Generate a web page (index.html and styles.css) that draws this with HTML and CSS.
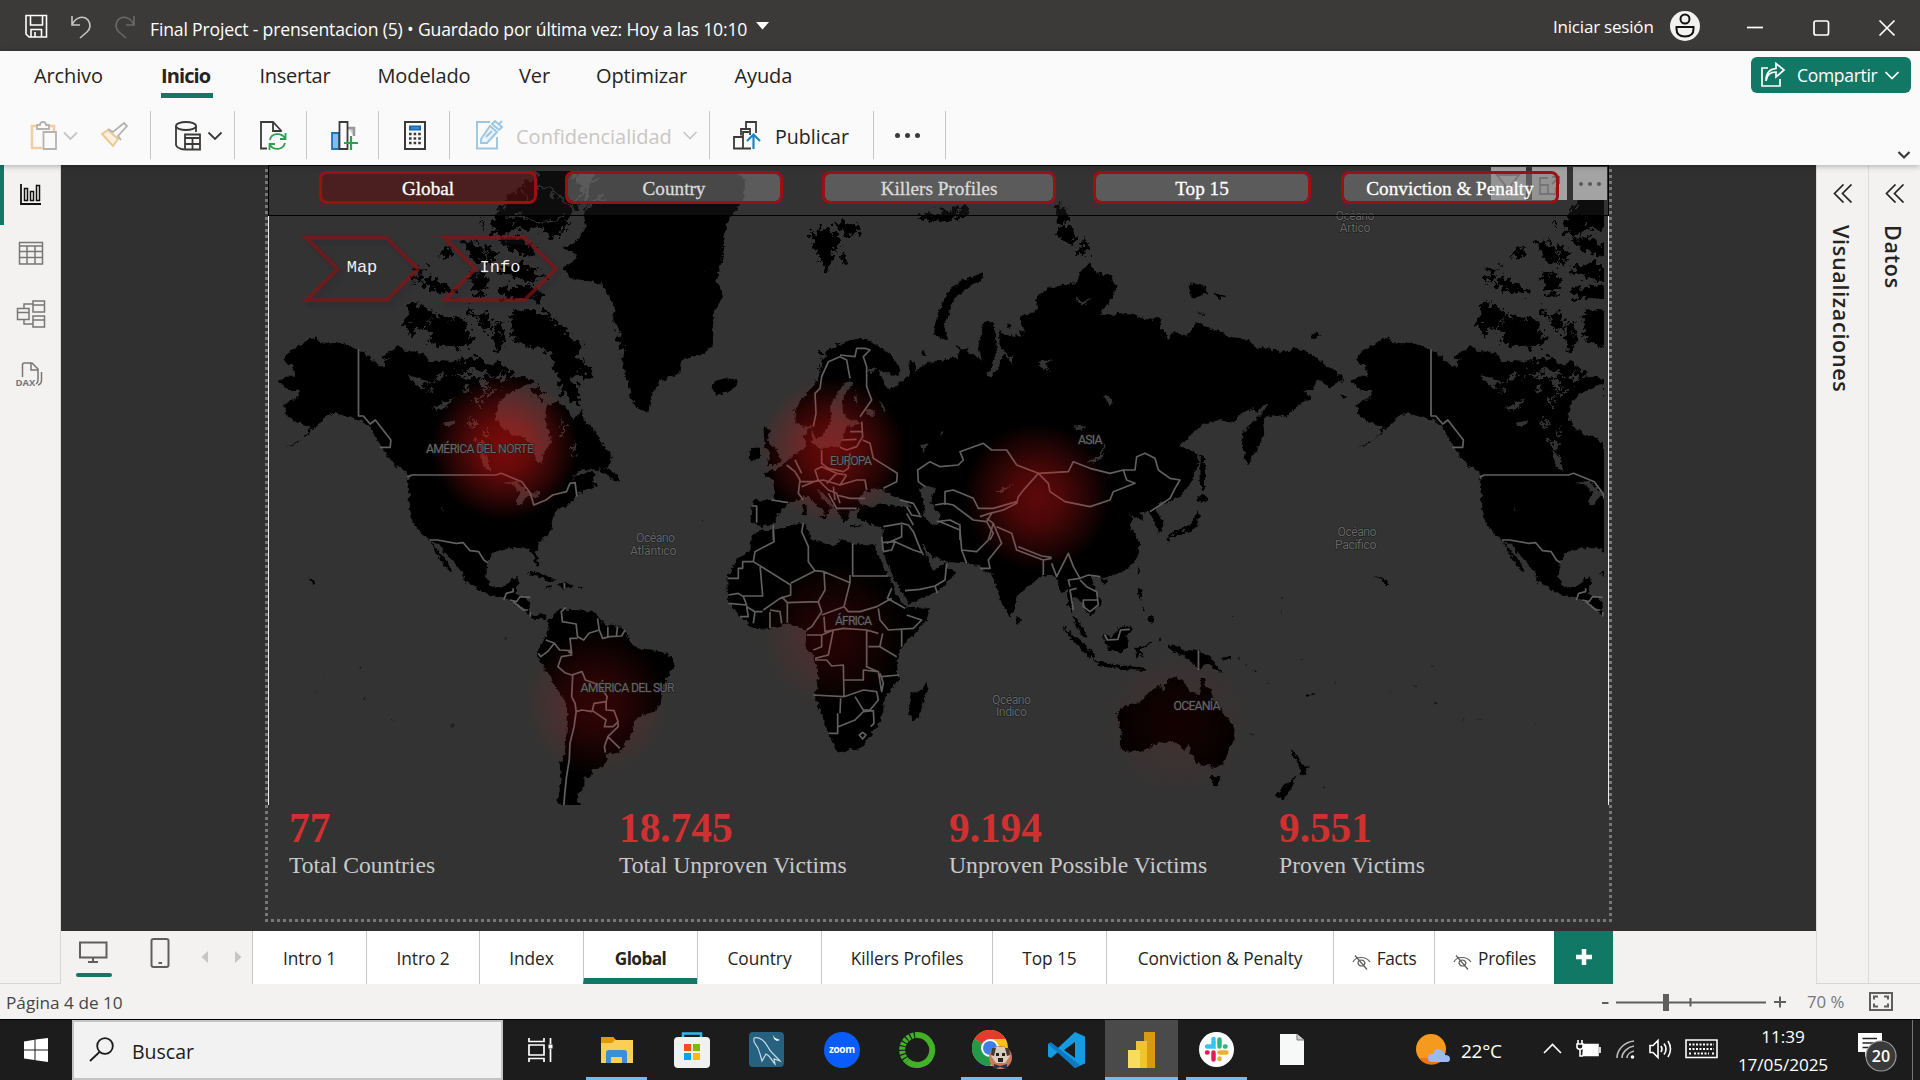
FILE: index.html
```html
<!DOCTYPE html>
<html lang="es">
<head>
<meta charset="utf-8">
<title>Final Project - prensentacion (5)</title>
<link rel="stylesheet" href="styles.css">
</head>
<body>
<header class="titlebar">
  <svg class="quick" width="140" height="51" viewBox="0 0 140 51" fill="none" stroke="#fff" stroke-width="1.6">
    <path d="M26 15.500H46.500V37H29L26 34Z M30.500 16V25H42.500V16 M31 37V29.500H41.500V37 M35 32V37"/>
    <path d="M72 16V25H80 M72.500 24C76 17 84 15 88 20C91 24 90.500 29 87 32L80 38" stroke="#c8c6c4"/>
    <path d="M134 16V25H126 M133.500 24C130 17 122 15 118 20C115 24 115.500 29 119 32L126 38" stroke="#6a6967"/>
  </svg>
  <span class="doc-title">Final Project - prensentacion (5) • Guardado por última vez: Hoy a las 10:10</span>
  <svg class="caret" width="14" height="8" viewBox="0 0 14 8"><path d="M0 0H13L6.500 7.500Z" fill="#fff"/></svg>
  <span class="signin">Iniciar sesión</span>
  <svg class="window-tools" width="250" height="51" viewBox="1670 0 250 51" fill="none" stroke="#fff" stroke-width="1.7">
    <circle cx="1685" cy="26" r="15" fill="#f3f2f1" stroke="none"/>
    <circle cx="1685" cy="19" r="4.500" stroke="#111" stroke-width="2"/>
    <path d="M1676.500 27H1693.500V29C1693.500 34 1690 36.500 1685 36.500S1676.500 34 1676.500 29Z" stroke="#111" stroke-width="2"/>
    <path d="M1747 27.500H1763"/><rect x="1814" y="21" width="14.500" height="14" rx="2"/><path d="M1879.500 20.500L1894.500 35.500M1894.500 20.500L1879.500 35.500"/>
  </svg>
</header>

<section class="ribbon">
  <nav class="ribbon-tabs">
    <span>Archivo</span><span class="on"><b>Inicio</b></span><span>Insertar</span><span>Modelado</span><span>Ver</span><span>Optimizar</span><span>Ayuda</span>
    <button class="share">
      <svg width="26" height="26" viewBox="0 0 26 26" fill="none" stroke="#fff" stroke-width="1.700"><path d="M8 6H2V24H20V17M6 19C7 12 11 10 16 10V15L24 8L16 1.500V6.500C9 7 6 12 6 19Z"/></svg>
      <span>Compartir</span>
      <svg width="16" height="9" viewBox="0 0 16 9" fill="none" stroke="#fff" stroke-width="1.700"><path d="M1.500 1L8 7.500L14.500 1"/></svg>
    </button>
  </nav>
  <div class="tools">
    <div class="tool t1">
      <svg width="126" height="48" viewBox="25 111 126 48" fill="none" stroke-width="1.800">
        <path d="M42 148H32V126H36 M49 126H54V131" stroke="#f3cda0" stroke-width="2.500"/><path d="M37 129V125H40C40 121 46 121 46 125H49V129Z M43.500 132H56V149H43.500Z" stroke="#b5b3b1" fill="#fafafa"/>
        <path d="M64 132.500L70.500 139L77 132.500" stroke="#c8c6c4"/>
        <path d="M102 134L108 130L118 139L113 146Z" stroke="#f0c596" fill="#fdf0dc" stroke-width="2"/><path d="M108 129L113 132L124 123L127 126L118 136L121 140" stroke="#b5b3b1"/>
      </svg>
    </div>
    <div class="tool t2">
      <svg width="83" height="48" viewBox="151 111 83 48" fill="none" stroke="#3b3a39" stroke-width="1.800">
        <ellipse cx="186" cy="126" rx="10" ry="4"/><path d="M176 126V145C177 148 180 149 184 149.500M196 126V132"/><path d="M185 134.500H200V149.500H185ZM185 138H200M185 144H200M192.500 138V149.500"/>
        <path d="M208.500 132.500L215 139L221.500 132.500"/>
      </svg>
    </div>
    <div class="tool t3">
      <svg width="71" height="48" viewBox="235 111 71 48" fill="none" stroke="#3b3a39" stroke-width="1.800"><path d="M267 148.500H261V122H273L281 130.500V132M273 122V131H281"/><path d="M270 140C271 133 281 132 285 138M285.500 133V139H280M285 143C283 150 274 151 270 145M269.500 150V144H275" stroke="#2f9e4f"/></svg>
    </div>
    <div class="tool t4">
      <svg width="71" height="48" viewBox="307 111 71 48" fill="none" stroke="#3b3a39" stroke-width="1.800"><path d="M332 133H339V149H332Z" fill="#83bdeb" stroke="#2372b8"/><path d="M348 128H354V136" stroke="#9a9896" fill="#ccc" stroke-width="2.500"/><path d="M339.500 122H347.500V149H339.500Z"/><path d="M351 136V150M344 143H358" stroke="#2f9e4f" stroke-width="2.200"/></svg>
    </div>
    <div class="tool t5">
      <svg width="71" height="48" viewBox="379 111 71 48" fill="none" stroke="#3b3a39" stroke-width="2"><path d="M405 122H425V149H405Z"/><path d="M410 126.500H420V129.500H410Z" stroke="#1569b5" fill="#5da9e8"/><path d="M409 134H421M409 138.500H421M409 143H421" stroke-width="2.600" stroke-dasharray="2.600 2"/></svg>
    </div>
    <div class="tool t6">
      <svg width="60" height="48" viewBox="450 111 60 48" fill="none" stroke="#9cc7e3" stroke-width="1.900"><path d="M490 122H477V148.500H497V137"/><path d="M481 139L490 126L497 132L487 143L481 143Z M486 137L492 131 M492 124L495 121L502 127L499 130Z M499 124L502 121" fill="#e9f4fa"/></svg>
      <span class="muted">Confidencialidad</span>
      <svg width="16" height="9" viewBox="0 0 16 9" fill="none" stroke="#c8c6c4" stroke-width="1.700"><path d="M1.500 1L8 7.500L14.500 1"/></svg>
    </div>
    <div class="tool t7">
      <svg width="60" height="48" viewBox="710 111 60 48" fill="none" stroke="#3b3a39" stroke-width="1.800"><path d="M741 135.500V129H746V122H756V133M746 129H750V135M734 137H743V148.500H734ZM743 137V132H749M743 148.500H751"/><path d="M753.500 149V134M747 141L753.500 134.500L760 141" stroke="#1b87c9" stroke-width="2.200"/></svg>
      <span>Publicar</span>
    </div>
    <div class="tool t8"><i></i><i></i><i></i></div>
    <svg class="collapse" width="14" height="9" viewBox="0 0 14 9" fill="none" stroke="#3b3a39" stroke-width="2.200"><path d="M1.500 1L7 6.500L12.500 1"/></svg>
  </div>
</section>

<main class="workspace">
  <aside class="rail">
    <svg width="60" height="240" viewBox="0 165 60 240" fill="none" stroke="#797775" stroke-width="1.500">
      <rect x="0" y="165" width="4" height="60" fill="#117865" stroke="none"/>
      <g stroke="#111"><path d="M21 184V204H41" stroke-width="1.800"/><path d="M24.500 188.500H27.500V200.500H24.500ZM30.500 191.500H33.500V200.500H30.500ZM36.500 185.500H39.500V200.500H36.500Z"/></g>
      <path d="M19.500 242.500H42.500V264H19.500ZM19.500 246H42.500M19.500 251.500H42.500M19.500 257.500H42.500M27 246V264M35 246V264"/>
      <path d="M33 301H44.500V312H33ZM33 305H44.500M33 316H44.500V327H33ZM33 320H44.500M17.500 308.500H29V319.500H17.500ZM17.500 312.500H29M24 308V304H33M24 320V324H33"/>
      <path d="M22.500 377V365C22.500 363.500 23 363 24.500 363H32L38 369V380C38 382 37.500 383 36 384M31 363V370H38M41.500 372V380C41.500 383 40 384.500 38 385"/>
      <text x="15.500" y="385.500" class="dax">DAX</text>
    </svg>
  </aside>

  <section class="center">
    <div class="canvas-area">
      <div class="report">
        <svg class="map" width="1331" height="634" viewBox="273 171 1331 634">
          <defs>
            <filter id="coast" x="-5%" y="-5%" width="110%" height="110%" color-interpolation-filters="sRGB"><feTurbulence type="fractalNoise" baseFrequency=".07" numOctaves="3" seed="4"/><feDisplacementMap in="SourceGraphic" scale="18" xChannelSelector="R" yChannelSelector="G"/></filter>
            <filter id="arctic-coast" x="-5%" y="-5%" width="110%" height="110%" color-interpolation-filters="sRGB"><feTurbulence type="fractalNoise" baseFrequency=".06" numOctaves="4" seed="9"/><feDisplacementMap in="SourceGraphic" scale="52" xChannelSelector="R" yChannelSelector="G"/></filter>
            <radialGradient id="heat"><stop offset="0" stop-color="#dc1414"/><stop offset=".35" stop-color="#d81414" stop-opacity=".82"/><stop offset=".7" stop-color="#d01818" stop-opacity=".4"/><stop offset="1" stop-color="#c81818" stop-opacity="0"/></radialGradient>
            <g id="north-america">
              <g transform="translate(260 160) scale(.34439 .33333)">
                <g filter="url(#coast)">
                  <path d="M150 530L175 545 200 550 240 548 285 568 310 585 330 605 345 612 360 590 385 570 400 555 420 572 450 575 470 580 490 600 500 610 530 600 560 605 600 610 640 600 665 620 690 600 700 610 740 640 720 655 760 650 780 655 800 665 745 690 720 700 700 720 688 740 685 780 700 800 735 825 760 828 785 850 795 880 800 900 815 912 822 880 845 850 840 820 830 790 830 750 835 735 860 725 890 740 905 770 910 780 935 750 945 790 965 800 985 840 1010 870 1022 890 1010 920 980 930 935 928 925 935 905 960 930 945 960 935 975 940 965 960 980 975 960 985 925 1000 890 1040 860 1050 850 1075 845 1100 850 1105 810 1150 800 1180 808 1210 806 1215 800 1210 790 1180 775 1165 735 1165 710 1170 680 1175 660 1205 657 1250 665 1275 690 1283 715 1275 725 1258 750 1255 745 1285 740 1300 775 1315 785 1330 780 1350 790 1365 800 1368 820 1362 835 1370 835 1378 820 1372 800 1378 785 1370 765 1345 735 1325 700 1310 670 1305 620 1280 590 1262 595 1250 570 1215 540 1180 520 1155 495 1142 470 1125 460 1110 440 1080 432 1050 432 990 430 960 428 945 425 935 400 920 375 895 360 870 345 850 330 820 320 800 300 785 275 778 240 765 215 760 190 770 170 795 145 815 110 850 75 862 120 840 150 800 120 790 100 785 75 765 70 735 85 720 115 710 110 690 80 690 55 665 75 650 105 650 95 620 65 600 95 565 130 548Z"/>
                  <path d="M495 1142L520 1175 540 1200 558 1235 545 1230 525 1200 505 1165Z M985 925L1010 925 1040 945 1045 970 1015 955Z M775 1240L800 1235 830 1245 860 1260 850 1266 820 1255Z M865 1270L885 1268 912 1278 890 1286 870 1282Z M922 1279h14v5h-14Z M828 1281h16v4h-16Z M140 1250L158 1260 163 1272 155 1275Z"/>
                </g>
                <g filter="url(#arctic-coast)">
                  <path d="M430 430L455 428 480 440 510 460 500 475 470 500 440 525 420 500Z M485 490L520 465 560 480 590 470 600 500 620 540 590 565 550 560 520 560 490 545 500 520 480 505Z M630 460L660 455 670 500 650 520 635 490Z M675 490L700 480 708 565 680 565Z M730 455L760 450 800 452 830 455 850 480 880 500 900 530 930 550 925 590 950 620 970 650 950 660 930 640 900 650 930 700 925 735 900 720 870 690 860 650 850 600 830 570 800 560 770 560 740 540 728 500Z M790 680L825 700 815 725 795 705Z M530 270L560 265 550 290 525 300Z M450 330L485 320 475 350 445 370Z M470 370L500 350 540 380 570 385 560 400 520 400 490 385Z M580 240L640 250 660 310 620 300Z M610 340L650 345 665 380 640 410 615 390Z M650 255L685 270 688 310 665 310Z M690 240L730 232 785 250 800 290 740 280Z M690 330L760 300 800 335 835 350 790 365 740 350Z M690 385L770 375 820 390 810 425 750 412 700 420Z M640 190L650 180 648 215Z M600 460L620 440 625 480Z M565 600L640 590 690 640 640 640Z"/>
                  <path d="M700 140L740 90 800 55 820 10 895 10 930 80 945 110 920 150 900 175 880 215 850 235 830 215 800 205 770 210 740 200 700 230 670 215 685 160Z"/>
                </g>
              </g>
            </g>
          </defs>
          <rect x="273" y="171" width="1331" height="634" fill="#333"/>
          <use href="#north-america"/><use href="#north-america" x="1072.500"/>
          <g transform="translate(260 160) scale(.34439 .33333)">
            <g filter="url(#coast)">
              <path d="M960 60L1000 10 1350 10 1410 60 1400 130 1370 165 1345 220 1340 300 1325 360 1345 410 1315 460 1315 555 1290 580 1225 600 1215 640 1160 665 1140 700 1130 755 1105 750 1080 725 1070 680 1060 640 1050 600 1065 570 1045 545 1050 520 1025 480 1030 440 1015 410 995 375 970 365 900 355 880 325 925 290 900 275 880 265 925 240 945 205 940 170Z M1310 680L1325 662 1350 655 1385 658 1385 675 1360 695 1325 708Z"/>
              <path d="M835 1390L850 1365 870 1350 885 1342 890 1350 920 1350 945 1352 975 1358 985 1375 1005 1395 1050 1400 1060 1410 1075 1440 1080 1455 1110 1465 1140 1470 1165 1475 1195 1490 1203 1510 1195 1535 1175 1565 1165 1600 1160 1635 1145 1655 1110 1665 1085 1685 1085 1715 1065 1745 1050 1770 1035 1780 1005 1780 1010 1800 990 1825 965 1828 965 1848 942 1850 942 1880 920 1905 925 1925 937 1945 875 1945 860 1920 875 1870 870 1810 885 1780 890 1720 895 1650 885 1620 855 1575 830 1530 805 1490 805 1465 825 1440 835 1420Z"/>
              <path d="M1290 330h3v3h-3ZM120 1450h4v3h-4ZM185 1535h4v4h-4ZM290 1520h6v6h-6ZM300 1610h5v8h-5ZM163 1595h5v4h-5ZM380 1678h4v3h-4ZM555 1697h5v3h-5ZM710 1430h4v6h-4ZM1282 1080h4v5h-4Z" fill="#181818"/>
            </g>
            <g filter="url(#arctic-coast)"><path d="M1330 170L1350 180 1335 330 1320 300Z M1270 470L1310 440 1315 550 1265 550Z M1035 520L1060 530 1065 600 1045 575Z"/></g>
          </g>
          <g filter="url(#coast)" transform="translate(740 160) scale(.33333)">
            <path d="M165 790L170 740 200 700 225 670 240 640 250 600 270 575 300 555 330 540 370 535 390 545 420 560 460 590 480 630 470 650 440 640 415 630 430 660 445 690 455 680 470 675 505 650 510 600 525 605 525 635 560 610 600 600 650 595 660 570 645 555 690 575 725 600 715 555 730 490 745 480 760 490 765 520 770 560 765 600 750 630 735 640 750 650 775 630 785 590 800 585 820 615 815 590 795 575 780 560 775 510 790 520 815 530 800 490 850 515 840 470 880 455 895 450 890 410 920 385 970 375 1010 370 1025 330 1050 310 1070 340 1110 345 1130 380 1120 410 1095 440 1080 465 1140 460 1180 465 1230 480 1260 470 1265 500 1285 540 1300 515 1340 530 1370 490 1400 500 1450 520 1475 535 1530 540 1545 560 1600 570 1640 575 1660 565 1700 575 1730 590 1760 620 1790 635 1812 655 1790 670 1770 685 1745 665 1730 660 1720 690 1690 690 1715 715 1680 730 1640 770 1610 765 1580 770 1570 790 1573 830 1550 870 1520 915 1505 850 1515 810 1570 755 1585 735 1575 730 1550 760 1540 745 1500 760 1480 790 1440 780 1390 790 1355 825 1320 860 1350 870 1375 885 1370 930 1350 970 1320 1010 1290 1025 1255 1030 1250 1050 1270 1090 1262 1115 1246 1105 1240 1070 1225 1055 1200 1060 1210 1080 1180 1070 1170 1060 1180 1080 1170 1095 1200 1150 1190 1200 1150 1235 1090 1255 1050 1245 1065 1285 1085 1330 1055 1365 1040 1355 1030 1330 1000 1310 995 1360 1020 1390 1045 1435 1030 1430 1005 1390 985 1330 980 1290 965 1300 950 1255 930 1245 910 1245 830 1305 825 1350 810 1373 785 1330 765 1265 760 1245 735 1230 720 1215 670 1210 620 1205 580 1190 545 1150 560 1190 580 1235 615 1210 625 1225 647 1240 620 1270 580 1300 505 1332 490 1305 460 1250 430 1185 425 1150 430 1105 380 1090 350 1070 360 1035 420 1030 375 990 355 1020 365 1040 330 1050 325 1085 310 1085 295 1055 275 1030 250 1000 230 990 240 1010 275 1040 262 1065 240 1045 205 1010 180 1015 145 1030 115 1060 100 1090 65 1100 35 1085 38 1022 100 1020 105 1005 100 960 70 940 110 925 140 905 160 885 200 860 190 830 215 800 215 850 240 865 300 860 310 835 320 800 370 790 330 780 310 760 305 720 340 670 320 660 300 690 270 740 275 780 245 830 225 835 215 795 190 800Z"/>
            <path d="M70 800L90 810 80 840 110 870 125 900 110 915 80 915 95 880 75 860Z M30 870L60 860 60 890 30 905Z M730 340L725 360 690 380 650 410 630 450 612 500 625 540 600 535 578 515 595 460 620 400 660 365 710 345Z M230 1068L262 1068 258 1078Z M188 1035h12v28h-12Z M330 1095h35v5h-35Z M545 575h14v12h-14Z"/>
            <path d="M1345 370L1390 375 1405 400 1355 415Z M1422 400L1458 408 1435 418Z M1370 450L1398 465 1380 462Z M1710 530L1730 515 1745 525 1720 535Z M1380 880L1395 900 1395 990 1380 980 1378 920Z M1375 1005L1408 1015 1385 1030 1372 1022Z M1375 1050L1380 1070 1360 1105 1330 1110 1290 1130 1282 1128 1320 1105 1350 1095Z M1795 705L1822 712 1810 716Z"/>
          </g>
          <g filter="url(#arctic-coast)" transform="translate(740 160) scale(.33333)">
            <path d="M210 220L260 205 285 215 300 250 280 270 265 345 245 310 225 270Z M280 185L350 190 355 215 325 235 295 205Z M305 270L325 300 310 315Z M530 170L600 155 690 140 690 160 630 185 540 182Z M950 150L965 130 990 170 975 195 950 190Z M950 205L985 195 1008 225 1000 258 970 245Z M1005 290L1035 235 1055 275Z M250 580L300 550 270 600 240 640Z M165 760L190 710 185 770Z"/>
          </g>
          <g filter="url(#coast)" transform="translate(700 500) scale(.33333)">
            <path d="M180 90L220 90 300 70 320 75 335 120 410 140 420 120 455 130 520 135 535 165 570 240 590 285 620 325 690 322 680 360 605 440 590 480 597 540 550 600 550 640 525 690 480 745 410 758 385 700 345 590 355 530 340 470 318 440 318 390 265 370 215 385 165 387 110 340 85 310 82 235 110 180 150 150 155 110Z M680 545L683 570 655 655 635 662 625 640 635 580 665 570Z M1085 378L1110 395 1150 430 1185 465 1180 480 1150 455 1110 410Z M1185 482L1240 492 1290 498 1340 508 1330 513 1240 505 1190 497Z M950 345L964 365 952 374Z M1203 235L1222 240 1210 258Z"/>
          </g>
          <g filter="url(#coast)" transform="translate(1080 520) scale(.34439 .33333)">
            <path d="M107 580L130 558 175 548 205 510 235 495 240 515 250 485 275 470 285 480 300 478 305 495 330 525 345 528 352 475 360 475 365 500 380 510 390 545 410 570 435 600 450 625 445 665 430 700 415 735 385 745 375 735 350 740 335 720 320 695 315 670 305 695 285 672 250 665 215 670 195 690 150 695 130 700 118 685 120 640Z M377 768L405 768 400 795 390 800Z M610 688L618 692 637 715 640 733 665 738 650 765 638 770 640 745Z M625 770L620 795 590 838 567 832 590 800Z M255 378L280 375 300 395 320 388 350 395 380 410 395 435 418 460 395 450 365 430 345 447 325 430 300 405 270 395Z M70 345L90 350 115 325 130 315 150 325 135 345 140 375 120 400 85 390 72 370Z"/>
            <path d="M158 385L185 378 205 362 208 368 178 388 185 415 172 400 165 415Z M168 205L182 212 176 235 184 246 170 232Z M195 300L205 288 217 290 212 312Z M178 255L190 270 182 275Z M168 140L178 150 168 162Z M410 415L435 405 438 415 415 422Z M540 555L566 572 555 565Z M500 450L515 456 505 456Z M655 525L682 518 660 532Z M230 348L236 362 230 364Z M250 60L275 40 300 35 335 -5 345 10 320 35 265 52 255 68Z M218 10L238 -5 242 20 230 38Z M850 166L878 176 896 192 888 192 875 180Z"/>
            <path d="M560 190h4v3h-4ZM580 233h5v4h-5ZM585 270h4v8h-4ZM440 288h5v3h-5ZM545 490h5v4h-5ZM645 420h4v5h-4ZM1020 440h8v4h-8ZM970 495h6v4h-6ZM895 515h6v5h-6ZM1030 550h5v5h-5ZM1110 598h4v4h-4ZM1155 596h5v3h-5ZM1288 617h5v4h-5ZM1320 610h4v3h-4ZM735 488h12v4h-12ZM498 640h5v6h-5ZM460 410h6v7h-6ZM480 430h8v4h-8ZM705 800h6v4h-6Z" fill="#181818"/>
          </g>
          <g class="water">
            <g id="nalakes" transform="translate(260 160) scale(.34439 .33333)">
              <path filter="url(#coast)" d="M710 968L745 962 770 985 790 1000 815 995 800 1015 775 1010 760 1035 745 1035 755 1000 740 980Z M430 645L460 655 500 668 470 672 475 690 455 675Z M500 740L530 730 560 715 540 745 510 755Z M635 870L655 885 672 935 655 925Z M530 790L570 780 550 800Z M525 1040L537 1050 530 1048Z"/>
              <path filter="url(#arctic-coast)" d="M500 655L530 640 535 660Z M585 690L605 675 612 700Z M640 700L660 690 655 715Z M620 720L645 715 640 740Z M600 790L630 780 610 805Z M645 810L670 800 660 830Z M480 690L510 680 500 700Z M560 640L640 628 680 650 600 655Z M630 850L660 840 655 880Z M870 800L890 790 885 830Z M900 860L920 850 910 890Z M690 640L720 630 700 680Z M330 600L370 590 350 625Z M640 640L680 700 650 690Z"/>
            </g>
            <use href="#nalakes" x="1072.500"/>
            <g filter="url(#coast)" transform="translate(740 160) scale(.33333)"><path d="M365 1030L380 1000 400 985 430 988 455 1005 500 1022 515 1040 480 1042 430 1032 385 1042Z M540 990L560 975 585 980 580 1010 570 1030 600 1060 600 1090 575 1095 555 1070 550 1030Z M1045 905L1080 885 1092 848 1097 855 1085 890 1060 908Z M375 745L400 750 405 770 385 765Z M420 720L435 745 430 755Z M345 685L352 720 345 740Z M895 605L940 598 915 615 930 632 905 625Z M1090 705L1120 720 1110 740Z M1005 410L1030 425 1055 410 1025 440Z M1000 795L1040 800 1020 810Z M540 855L570 850 550 875Z M600 820L612 810 605 830Z M800 520L845 530 830 500 855 515 850 500 820 490Z M770 990L820 975 780 1000Z M380 630L410 620 400 640Z"/></g>
            <path filter="url(#coast)" d="M508 214C530 220 545 222 562 216M537 184L575 210 605 197M598 174L578 200 566 232M520 190L530 205" fill="none" stroke="#333" stroke-width="1.600"/>
          </g>
          <g class="borders">
            <g id="na-borders" transform="translate(260 160) scale(.34439 .33333)"><path d="M286 568V768L300 768 320 792 335 780 350 800 380 840 378 862 348 862 M428 952L440 945H685L700 940 760 965 785 1000 795 1035 830 1020 850 1005 890 995 900 970 915 968 920 1010 M492 1140L515 1140 570 1150 590 1148 610 1172 635 1175 650 1200 662 1208 M708 1320L715 1300 735 1295V1285 M725 1320L745 1325 755 1310 785 1312 M735 1325L765 1350 778 1350 M785 1370V1355 M884 1268V1286"/></g>
            <use href="#na-borders" x="1072.500"/>
            <g transform="translate(260 160) scale(.34439 .33333)"><path d="M888 1342L875 1355 878 1385 918 1392 922 1430 940 1440 955 1420 985 1410 980 1375 M922 1435H900L905 1480 895 1475 M985 1410L995 1435 1015 1430 1050 1428 1060 1410 M1010 1430V1400 M1035 1428L1038 1400 M830 1440L855 1450 870 1470 900 1472 905 1485 875 1490 865 1520 885 1538 905 1545 935 1535 945 1560 985 1575 1008 1610 1005 1625 970 1630 965 1652 1005 1680 1000 1700H1025L1040 1685 1028 1652 1005 1650V1625 M855 1450L835 1475 815 1490 808 1480 M908 1545L905 1610 915 1630 918 1655 935 1650 965 1655 M918 1655L912 1700 900 1750 898 1800 890 1850 885 1900 882 1940 M1040 1690V1700L1010 1730 1000 1760 1003 1778 M1010 1730L1045 1765"/></g>
            <g transform="translate(740 160) scale(.33333)"><path d="M555 980L535 965 533 930 570 905 600 920 655 915 670 900 660 875 730 850 755 870 800 870 830 915 895 940 855 985 835 1010 830 1030 790 1050 750 1060 720 1070 M895 940L925 970 930 995 975 1025 1050 1040 1110 1020 1120 995 1185 970 1160 960 1150 930 1110 940 1050 925 1000 905 985 935 895 940 M1150 930H1185L1190 890 1215 880 1245 895 1255 930 1290 955 1320 960 1305 985 1290 1015 1230 1055 M615 1035V995L640 990 700 1015 715 1045 760 1045 830 1025 M585 1035L615 1030 640 1035 700 1080 740 1085 755 1060 M590 1085L630 1080 660 1095V1140 M740 1085L760 1120 750 1140 M220 800L228 760 225 700 240 685 245 650 265 605 300 590 320 600 330 655 M300 585L345 590 350 565 375 565 390 570 370 590 380 620V680L395 720 360 770 M365 785L368 830 350 860 320 870 300 862 M330 815H365 M305 840L350 838 M368 840L390 850 400 895 440 920 472 940 470 965 430 985 M245 870V910L265 925 310 935 325 925 330 880 M225 930L245 920 290 940 320 945 M140 915L165 935 180 960 175 1000 190 1020 M165 900L185 940 M180 965H220L250 960 300 975 M235 960L265 990 290 1000 300 1030 M300 975L350 960 375 960 380 990 M290 1005L330 1015 375 1015 M265 1000L290 1045 350 1045 M320 945L300 975 M290 940L260 970 M225 930L235 960 185 980 M280 980L285 1020 M50 1040V1088 M35 1038H52 M95 1020L145 1028 M480 1020L520 1030 540 1065 M500 1040L515 1065 545 1070 M100 1095V1140"/></g>
            <g transform="translate(700 500) scale(.33333)"><path d="M550 80L605 70 625 75 640 95 660 145 670 165 M560 130L605 110V75 M585 125L640 150 670 160 M545 110L550 155 575 150 585 125 545 128 M640 75L620 40 M720 65L780 90 785 150 800 190 M785 150L830 155 865 120 880 70 860 55 M880 70L905 130 865 180 870 205 840 205 M890 80L935 100 950 150 1030 180 1055 175 M955 140L1025 168 1055 172 M1030 180V225 M1055 190L1070 230 1090 190 1105 160 1120 200 1140 235 1165 225 1200 230 M1110 260L1105 240 1140 235 M1120 330L1110 270 1130 265 M1140 240L1160 260 1190 275 1195 315 1170 335 1150 320V300L1195 300 M615 272L660 268 705 258 735 240 740 190 M705 258L712 280 M220 90L222 125 165 155 160 185 M82 235H115V205H128V185H160L272 255V285L240 295 190 330 M180 195L188 288H130 M272 250L345 212 325 185V140L305 95 310 70 M345 212L372 215 450 248V225 M458 130V228H565 M450 248L432 320 M372 215L375 270 355 305 262 308 245 290 M262 308V368 M245 370L240 335 210 330 M210 385V335 M188 335H165L160 370 M165 335L140 320 145 350 120 350 M85 285L115 280 130 290 140 315 85 310 M355 305L365 335 335 380 320 390 M365 345L432 320 445 335 480 335 530 320 575 295 M575 265L562 295 615 325 M620 345L665 360 640 385 565 390 540 360 535 325 M372 350L375 395 430 385 500 390 535 400 M320 405H365L400 390 385 465 345 475 M365 405V440L340 450 M345 480H380L395 498 430 495 432 590 340 585 M432 540H490V510L535 515 545 575 550 550 540 520 M500 390V500L535 515 M505 440H540L590 470 M548 400L540 438 M605 390V440 M545 530L597 525 M432 590L490 570 530 575 535 600 510 630 490 630 465 590 M422 595L420 640 M413 640V700H385 M415 680L465 660 490 635 520 632 522 670 512 680 M478 705L488 697 498 705 488 717Z"/></g>
            <g transform="translate(1080 520) scale(.34439 .33333)"><path d="M344 392V450 M72 345L80 360 110 358 118 330 145 328"/></g>
          </g>
          <circle cx="505" cy="447" r="74" fill="url(#heat)" opacity=".56"/>
          <circle cx="832" cy="450" r="73" fill="url(#heat)" opacity=".46"/>
          <circle cx="1037" cy="497" r="74" fill="url(#heat)" opacity=".42"/>
          <circle cx="596" cy="703" r="73" fill="url(#heat)" opacity=".23"/>
          <circle cx="832" cy="635" r="73" fill="url(#heat)" opacity=".17"/>
          <circle cx="1177" cy="723" r="72" fill="url(#heat)" opacity=".09"/>
          <g class="places">
            <text x="426" y="453" textLength="108">AMÉRICA DEL NORTE</text>
            <text x="580.500" y="691.500" textLength="94">AMÉRICA DEL SUR</text>
            <text x="830" y="465" textLength="42">EUROPA</text>
            <text x="1078" y="444" textLength="24.500">ASIA</text>
            <text x="835" y="624.500" textLength="37">ÁFRICA</text>
            <text x="1173.500" y="710" textLength="47">OCEANÍA</text>
            <text x="636" y="542" textLength="39">Océano</text><text x="630" y="555" textLength="46.500">Atlántico</text>
            <text x="992" y="703.500" textLength="39">Océano</text><text x="996" y="716" textLength="31">Índico</text>
            <text x="1337.500" y="536" textLength="39">Océano</text><text x="1335" y="548.500" textLength="41.500">Pacífico</text>
            <text x="1335.500" y="219.500" textLength="39">Océano</text><text x="1339.500" y="232" textLength="31">Ártico</text>
          </g>
        </svg>

        <nav class="report-nav">
          <span class="current">Global</span><span class="dim">Country</span><span class="dim wide">Killers Profiles</span><span>Top 15</span><span>Conviction &amp; Penalty</span>
        </nav>
        <svg class="visual-tools" width="117" height="34" viewBox="1491 167 117 34" fill="none" stroke="#777" stroke-width="1.800">
          <path d="M1491 167h35v33h-35Z M1532 167h35v33h-35Z M1573 167h34v33h-34Z" fill="#c9c9c9" stroke="none"/>
          <path d="M1497 175H1519L1511 185V194H1505V185Z M1548 178H1540V194H1556V187M1540 185H1548V194M1552 177H1559V184M1559 177L1552 184"/>
          <g fill="#666" stroke="none"><circle cx="1581" cy="184" r="2"/><circle cx="1590" cy="184" r="2"/><circle cx="1599" cy="184" r="2"/></g>
        </svg>

        <div class="switches">
          <div class="arrow"><svg width="124" height="76" viewBox="0 0 124 76"><path d="M6.500 3.800H86.500L118 35L86.500 66.200H6.500L37.500 35Z"/></svg><span>Map</span></div>
          <div class="arrow"><svg width="124" height="76" viewBox="0 0 124 76"><path d="M6.500 3.800H86.500L118 35L86.500 66.200H6.500L37.500 35Z"/></svg><span>Info</span></div>
        </div>

        <div class="kpis">
          <div><strong>77</strong><span>Total Countries</span></div>
          <div><strong>18.745</strong><span>Total Unproven Victims</span></div>
          <div><strong>9.194</strong><span>Unproven Possible Victims</span></div>
          <div><strong>9.551</strong><span>Proven Victims</span></div>
        </div>
      </div>
    </div>

    <nav class="pages">
      <svg width="191" height="53" viewBox="61 931 191 53" fill="none" stroke="#605e5c" stroke-width="2">
        <path d="M80 942.500H106.500V957.500H80ZM93 958V962M88 962H98"/><rect x="76" y="973" width="36" height="4" rx="2" fill="#117865" stroke="none"/>
        <rect x="151.500" y="939" width="17" height="28" rx="2"/><path d="M158.500 963H162"/>
        <path d="M208 951V963L201.500 957Z M235 951V963L241.500 957Z" fill="#c8c6c4" stroke="none"/>
      </svg>
      <span class="p1">Intro 1</span><span class="p2">Intro 2</span><span class="p3">Index</span><span class="p4 active">Global</span><span class="p5">Country</span><span class="p6">Killers Profiles</span><span class="p7">Top 15</span><span class="p8">Conviction &amp; Penalty</span>
      <span class="p9"><svg width="19" height="17" viewBox="0 0 19 17"><path d="M1 8C4 2 14 2 18 8M3 1.500L15 15.500M6 9C6 5 12 5 13 9C12 13 7 13 6 9Z"/></svg>Facts</span>
      <span class="p10"><svg width="19" height="17" viewBox="0 0 19 17"><path d="M1 8C4 2 14 2 18 8M3 1.500L15 15.500M6 9C6 5 12 5 13 9C12 13 7 13 6 9Z"/></svg>Profiles</span>
      <button class="add"><svg width="18" height="18" viewBox="0 0 18 18"><path d="M9 1V17M1 9H17" stroke="#fff" stroke-width="4.500"/></svg></button>
    </nav>
  </section>

  <aside class="pane"><svg width="20" height="19" viewBox="0 0 20 19"><path d="M10.500 .5L1.500 9.500L10.500 18.500M18.500 .5L9.500 9.500L18.500 18.500"/></svg><span>Visualizaciones</span></aside>
  <aside class="pane"><svg width="20" height="19" viewBox="0 0 20 19"><path d="M10.500 .5L1.500 9.500L10.500 18.500M18.500 .5L9.500 9.500L18.500 18.500"/></svg><span>Datos</span></aside>
</main>

<footer class="status">
  <span class="page-count">Página 4 de 10</span>
  <svg width="190" height="34" viewBox="1600 985 190 34" stroke="#605e5c" stroke-width="2"><path d="M1602 1003H1608.500M1616 1002.500H1766M1690.500 998V1006.500M1774 1002H1786M1780 996.500V1007.500"/><path d="M1666 994V1011" stroke-width="6"/></svg>
  <span class="zoom">70 %</span>
  <svg width="24" height="19" viewBox="0 0 24 19" fill="none" stroke="#605e5c" stroke-width="2"><path d="M1 1H23V18H1Z M9 4.500H5V7.500M15 4.500H19V7.500M9 14.500H5V11.500M15 14.500H19V11.500"/></svg>
</footer>

<footer class="taskbar">
  <svg class="start" width="24" height="24" viewBox="0 0 24 24" fill="#fff"><path d="M0 3.500L10.500 1.700V11.500H0ZM11.500 1.500L24 0V11.500H11.500ZM0 12.500H10.500V22L0 20.500ZM11.500 12.500H24V24L11.500 22.300Z"/></svg>
  <div class="search"><svg width="26" height="25" viewBox="0 0 26 25" fill="none" stroke="#1b1b1b" stroke-width="1.800"><circle cx="16" cy="9" r="7.800"/><path d="M10.500 15L1 24"/></svg><span>Buscar</span></div>
  <svg class="view" width="26" height="24" viewBox="0 0 26 24" fill="none" stroke="#fff" stroke-width="1.700"><path d="M1 0V3.500H16V0M1 7H16V17H1ZM1 24V20.500H16V24M22.500 0V6M22.500 11V24"/><path d="M20.500 6.500h4v4h-4Z" fill="#fff" stroke="none"/></svg>
  <div class="apps">
    <div class="run"><svg width="34" height="30" viewBox="0 0 34 30"><path d="M1 2H13L16 5H33V28H1Z" fill="#f9cf57"/><path d="M1 2H13L15 5L12 8H1Z" fill="#dd9a0a"/><path d="M6 28V18Q6 15 9 15H24Q27 15 27 18V28H22V22H11V28Z" fill="#3b8fd9"/></svg></div>
    <div><svg width="36" height="36" viewBox="0 0 36 36"><path d="M9 8V1.500H27V8" fill="none" stroke="#35b6f2" stroke-width="2.500"/><rect y="5" width="36" height="31" rx="4" fill="#f1f1f1"/><path d="M10 12h7v7h-7Z" fill="#f25022"/><path d="M19 12h7v7h-7Z" fill="#7fba00"/><path d="M10 21h7v7h-7Z" fill="#00a4ef"/><path d="M19 21h7v7h-7Z" fill="#ffb900"/></svg></div>
    <div><svg width="35" height="35" viewBox="0 0 35 35"><rect width="35" height="35" rx="4" fill="#276180"/><path d="M5 6C10 4 16 9 19 15C21 20 26 23 31 29L25 27L26 32C21 27 22 24 17 22L13 29L11 22C10 16 8 14 5 10Z" fill="none" stroke="#c6d9e3" stroke-width="1.200"/><path d="M24 3L26 6L31 8L28 9L25 7Z" fill="#fff"/></svg></div>
    <div><svg width="36" height="36" viewBox="0 0 36 36"><circle cx="18" cy="18" r="18" fill="#0b5cff"/><text x="18" y="21" text-anchor="middle" class="zoom-logo" textLength="26">zoom</text></svg></div>
    <div><svg width="38" height="38" viewBox="0 0 38 38" fill="none" stroke="#43b02a"><path d="M19 4A15 15 0 1 1 9 30" stroke-width="6"/><path d="M9 30A15 15 0 0 1 19 4" stroke-width="6" stroke-dasharray="3 1.200"/></svg></div>
    <div class="run"><svg width="40" height="40" viewBox="0 0 40 40"><circle cx="18" cy="18" r="18" fill="#fbc116"/><path d="M18 18L2.400 9A18 18 0 0 1 33.600 9H18Z" fill="#e33b2e"/><path d="M2.400 9A18 18 0 0 0 18 36L26 22L18 18Z" fill="#229a4a"/><circle cx="18" cy="18" r="9" fill="#fff"/><circle cx="18" cy="18" r="7" fill="#3f7ee8"/><circle cx="28.500" cy="27.500" r="11.500" fill="#c9785c"/><path d="M21 19L25 17H32L36 19L38 26L33 33H24L19 26Z" fill="#d8cdbd"/><path d="M20 18L24 18L22 26L19 25ZM37 18L33 18L35 26L38 25Z" fill="#4a3a32"/><path d="M24 23h3v3h-3ZM30 23h3v3h-3ZM26 28h5v4h-5Z" fill="#27201e"/><path d="M22 34L28 36L35 34V39L28 37L22 39Z" fill="#26344f"/></svg></div>
    <div><svg width="37" height="36" viewBox="0 0 37 36"><path d="M27 0L37 4.500V31.500L27 36L10 20L3 26L0 24.500V12L3 10.500L10 16ZM27 10L16 18L27 26Z" fill="#159be2" fill-rule="evenodd"/><path d="M0 12L3 10.500L32 33L27 36Z" fill="#0b7ac3"/></svg></div>
    <div class="run active"><svg width="28" height="36" viewBox="0 0 28 36"><path d="M16 0H27V36H16Z" fill="#d79b10"/><path d="M8 9H19V36H8Z" fill="#efc42c"/><path d="M0 18H12V36H0Z" fill="#f8dc5c"/></svg></div>
    <div class="run"><svg width="35" height="35" viewBox="0 0 35 35" fill="none" stroke-width="4.500" stroke-linecap="round"><circle cx="17.500" cy="17.500" r="17.500" fill="#fff"/><path d="M14.500 9V14.500H8M14.500 7.500V7" stroke="#36c5f0"/><path d="M20.500 7.500V14.500M26.500 14.500H26" stroke="#2eb67d"/><path d="M20.500 20.500H27.500M20.500 26.500V27" stroke="#ecb22e"/><path d="M14.500 20.500V27.500M8 20.500H8.500" stroke="#e01e5a"/></svg></div>
    <div><svg width="24" height="31" viewBox="0 0 24 31"><path d="M0 0H17L24 6V31H0Z" fill="#f7f8f8"/><path d="M17 0V6H24" fill="#ccc" stroke="#777"/></svg></div>
  </div>
  <svg class="weather" width="36" height="32" viewBox="0 0 36 32"><circle cx="15" cy="15" r="15" fill="#f59a1f"/><path d="M3 24A15 15 0 0 0 28 24Z" fill="#ee7411"/><path d="M15 28Q11 27 12 23Q13 20 17 20Q19 13 25 16Q28 17 29 21Q34 21 34 25Q34 28 31 28Z" fill="#9db9f3"/></svg>
  <span class="temp">22°C</span>
  <svg class="tray" width="180" height="30" viewBox="1542 1036 180 30" fill="none" stroke="#fff" stroke-width="1.600">
    <path d="M1544 1054L1552.500 1045.500L1561 1054"/>
    <path d="M1584 1045.500H1598V1056.500H1583Z" fill="#fff"/><path d="M1600 1048V1054M1577 1045H1583V1048C1583 1051 1577 1051 1577 1048ZM1578 1041V1045M1582 1041V1045M1580 1050V1057H1583"/>
    <path d="M1617 1059C1617 1050 1625 1043 1634 1042M1622 1059C1622 1053 1628 1048 1634 1047M1627 1059C1627 1056 1630 1053 1634 1052" stroke="#bbb"/><circle cx="1632.500" cy="1058" r="1.800" fill="#fff" stroke="none"/>
    <path d="M1650 1046.500H1653L1658 1041.500V1058.500L1653 1053.500H1650ZM1661 1047Q1663 1050 1661 1053M1664 1044.500Q1668 1050 1664 1055.500M1668 1042Q1673 1050 1668 1058"/>
    <path d="M1686 1041H1717V1058.500H1686Z"/><path d="M1689 1045.500H1714M1689 1050H1714M1689 1054.500H1691M1694 1054.500H1709M1712 1054.500H1714" stroke-width="2" stroke-dasharray="2 1.500"/>
  </svg>
  <div class="clock"><span>11:39</span><span>17/05/2025</span></div>
  <svg class="notes" width="50" height="50" viewBox="1850 1030 50 50"><path d="M1858 1038H1882V1057H1870L1865 1062V1057H1858Z" fill="#fff"/><path d="M1862.500 1043.500H1877M1862.500 1048H1877M1862.500 1052.500H1874" stroke="#222" stroke-width="1.500"/><circle cx="1881" cy="1061" r="15" fill="#3a3a3a" stroke="#999" stroke-width="1.200"/><text x="1881" y="1067" text-anchor="middle">20</text></svg>
  <i class="peek"></i>
</footer>
</body>
</html>
```
FILE: styles.css
```css
*, *::before, *::after { box-sizing: border-box; }
body {
  margin: 0;
  width: 1920px;
  height: 1080px;
  overflow: hidden;
  display: grid;
  grid-template-rows: 51px 114px 819px 35px 61px;
  font-family: "Open Sans", "Noto Sans", sans-serif;
  color: #252423;
}
svg { display: block; flex: none; }
span, strong { white-space: nowrap; }
button { border: 0; padding: 0; font: inherit; }

.titlebar { background: #3b3a38; color: #fff; display: flex; align-items: center; }
.quick { margin-right: 10px; }
.doc-title { font-size: 17.600px; letter-spacing: -.17px; width: 597px; padding-top: 6px; }
.caret { margin-left: 9px; }
.signin { margin-left: auto; font-size: 17px; letter-spacing: -.2px; width: 102px; padding-top: 1px; }
.window-tools { margin-left: 15px; }

.ribbon { background: #fafafa; display: grid; grid-template-rows: 60px 54px; box-shadow: 0 1px 6px rgba(0,0,0,.3); z-index: 2; }
.ribbon-tabs { display: flex; align-items: flex-start; padding: 6px 9px 0 34px; font-size: 20px; }
.ribbon-tabs > span { height: 41px; line-height: 37px; letter-spacing: -.12px; }
.ribbon-tabs > span:nth-child(1) { width: 127px; }
.ribbon-tabs > span:nth-child(2) { width: 52px; margin-right: 46.500px; letter-spacing: -.9px; border-bottom: 5px solid #117865; }
.ribbon-tabs > span:nth-child(3) { width: 118px; letter-spacing: -.3px; }
.ribbon-tabs > span:nth-child(4) { width: 141.500px; }
.ribbon-tabs > span:nth-child(5) { width: 77px; }
.ribbon-tabs > span:nth-child(6) { width: 138.500px; }
.share { margin-left: auto; width: 160px; height: 36px; border-radius: 6px; background: #117865; color: #fff; display: flex; align-items: center; padding-left: 9px; font-size: 17.500px; letter-spacing: -.3px; }
.share span { width: 87px; margin-left: 11px; text-align: left; }
.tools { display: flex; align-items: flex-start; }
.tool { height: 48px; border-right: 1px solid #c8c6c4; display: flex; align-items: center; font-size: 19.600px; }
.tool span { padding-top: 2px; }
.t1 { width: 151px; padding-left: 25px; }
.t2 { width: 84px; }
.t3 { width: 72px; }
.t4 { width: 72px; }
.t5 { width: 71px; }
.t6 { width: 260px; }
.t6 span { width: 166px; margin-left: 6px; font-size: 20px; }
.t7 { width: 164px; }
.t7 span { margin-left: 5px; }
.t8 { width: 72px; gap: 5px; padding-left: 21px; }
.t8 i { width: 5px; height: 5px; border-radius: 50%; background: #3b3a39; }
.muted { color: #c8c6c4; }
.collapse { margin: 40px 9px 0 auto; }

.workspace { display: grid; grid-template-columns: 61px 1755px 52px 52px; background: #f3f2f1; border-bottom: 1px solid #d8d6d4; min-height: 0; }
.rail { border-right: 1px solid #d8d6d4; }
.dax { font: 700 9.500px "Open Sans", sans-serif; fill: #797775; stroke: none; }
.center { display: grid; grid-template-rows: 766px 53px; min-height: 0; }
.canvas-area { background: #303030; padding-left: 204px; }
.report { position: relative; width: 1347px; height: 757px; padding: 0 3px; background: #333; display: grid; grid-template-rows: 51px 590px 113px; }
.report::before { content: ""; position: absolute; inset: 3px 0 0 0;
  background:
    repeating-linear-gradient(0deg, #777 0 3px, transparent 3px 6px) left / 3px 100% no-repeat,
    repeating-linear-gradient(0deg, #777 0 3px, transparent 3px 6px) right / 3px 100% no-repeat,
    repeating-linear-gradient(90deg, #777 0 3px, transparent 3px 6px) bottom / 100% 3px no-repeat; }
.report::after { content: ""; position: absolute; left: 3px; top: 51px; width: 1341px; height: 589px; border: solid #eee; border-width: 0 1px; }
.map { position: absolute; left: 8px; top: 6px; }
.borders { fill: none; stroke: #606060; stroke-width: 5; stroke-linejoin: round; }
.water { fill: #333; }
.places { font: 12.300px Roboto, sans-serif; fill: #666; stroke: #1c1c1c; stroke-width: 1.200px; paint-order: stroke; }

.report-nav { position: relative; z-index: 2; width: 1341px; border: 1px solid #000; background: rgba(51,51,51,.25); display: flex; align-items: flex-start; padding: 5px 0 0 50px; font: 19.200px/30px "Liberation Serif", serif; color: #fff; -webkit-text-stroke: .3px; }
.report-nav span { width: 218px; height: 33px; border: 3px solid #9b1010; border-radius: 8px; text-align: center; background: rgba(131,131,131,.5); background-clip: padding-box; margin-right: 28px; line-height: 29px; }
.report-nav .wide { width: 234px; margin: 0 38px 0 11px; }
.report-nav span:nth-child(3) { margin-right: 37px; }
.report-nav span:nth-child(4) { margin-right: 30px; }
.report-nav .current { background-color: rgba(99,11,11,.5); }
.report-nav .dim { color: #dadada; }
.visual-tools { position: absolute; left: 1226px; top: 2px; z-index: 1; }

.switches { position: relative; display: flex; gap: 14px; padding: 18px 0 0 32px; height: 94px; }
.arrow { width: 124px; height: 76px; display: grid; place-items: center; font: 17px "Liberation Mono", monospace; color: #f0f0f0; }
.arrow svg, .arrow span { grid-area: 1 / 1; }
.arrow span { margin: -9px 0 0 0; }
.arrow path { fill: none; stroke: #8c1212; stroke-opacity: .68; stroke-width: 3.800; filter: drop-shadow(3px 4px 2px rgba(35,35,55,.6)); }

.kpis { display: grid; grid-template-columns: repeat(4, 330px); padding: 3px 0 0 21px; font-family: "Liberation Serif", serif; color: #c8c8c8; position: relative; }
.kpis div { display: flex; flex-direction: column; }
.kpis strong { font-size: 41.300px; line-height: 38px; color: #d03030; }
.kpis span { font-size: 23.650px; line-height: 28px; margin-top: 4px; }

.pages { display: flex; font-size: 17.300px; background: #f3f2f1; }
.pages > span { background: #fff; border-left: 1px solid #c8c6c4; display: flex; align-items: center; justify-content: center; padding-top: 2px; letter-spacing: -.05px; }
.p1 { width: 114px; }
.p2 { width: 113px; }
.p3 { width: 104px; }
.p4 { width: 114px; }
.p5 { width: 124px; }
.p6 { width: 171px; }
.p7 { width: 114px; }
.p8 { width: 227px; }
.p9 { width: 101px; }
.p10 { width: 120px; }
.pages > .active { font-weight: 700; border-bottom: 6px solid #117865; padding-top: 8px; letter-spacing: -.6px; }
.pages > .p9, .pages > .p10 { letter-spacing: -.3px; }
.pages > span svg { fill: none; stroke: #605e5c; stroke-width: 1.200; margin: 8px 6px 0 0; }
.add { width: 59px; background: #117865; display: grid; place-items: center; padding-bottom: 2px; }

.pane { border-left: 1px solid #dddbd9; padding: 19px 0 0 16px; }
.pane svg { fill: none; stroke: #252423; stroke-width: 1.700; }
.pane span { display: block; writing-mode: vertical-rl; font-size: 21.500px; line-height: 26px; font-weight: 600; letter-spacing: .7px; margin: 22px 0 0 -5px; }

.status { background: #f3f2f1; display: flex; align-items: center; padding: 0 27px 0 6px; font-size: 16.500px; color: #484644; }
.page-count { font-size: 17.200px; padding-top: 2px; }
.status svg:first-of-type { margin-left: auto; }
.zoom { width: 64px; padding-left: 17px; margin-right: 15px; color: #797775; font-size: 16.800px; }

.taskbar { background: #1c1c1c; color: #fff; display: flex; align-items: center; border-top: 1px solid #000; }
.start { margin: 0 24px 0 24px; }
.search { width: 431px; height: 60px; background: #f2f2f2; border: 2px solid #c4c4c4; color: #1b1b1b; font-size: 19.500px; display: flex; align-items: center; padding-left: 15px; }
.search span { margin: 3px 0 0 17px; }
.search svg { margin-bottom: 2px; }
.view { margin: 0 25px 0 25px; }
.apps { display: grid; grid-template-columns: repeat(10, 75px); height: 60px; }
.apps div { display: grid; place-items: center; margin: 0 7px; border-bottom: 3px solid transparent; border-top: 2px solid transparent; }
.apps .run { border-bottom-color: #76b9ed; }
.apps .active { margin: 0 1px; background: #4a4a4a; border-top-color: #4a4a4a; border-bottom-color: #76b9ed; }
.zoom-logo { font: 700 10px "Open Sans", sans-serif; fill: #fff; }
.weather { margin-left: 87px; }
.temp { font-size: 19px; letter-spacing: -.3px; margin-left: 9px; width: 81px; padding-top: 2px; }
.clock { display: flex; flex-direction: column; align-items: center; gap: 3px; font-size: 17.200px; line-height: 25px; letter-spacing: -.1px; width: 122px; }
.notes { margin-left: 6px; }
.notes text { font: 600 16px "Open Sans", sans-serif; fill: #fff; }
.peek { width: 1px; height: 60px; background: #777; margin-left: auto; margin-right: 7px; }
```
